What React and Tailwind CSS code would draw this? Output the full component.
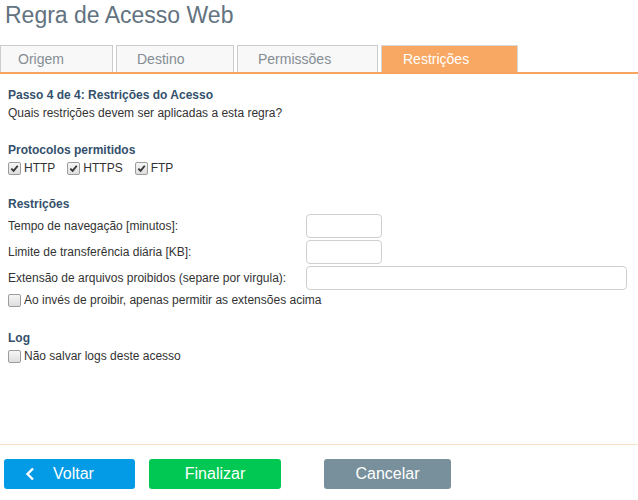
import React from 'react';

const tabs = [
  { label: 'Origem', w: 'w-[113px]', pl: 'pl-[17px]' },
  { label: 'Destino', w: 'w-[118px]', pl: 'pl-[20px]' },
  { label: 'Permissões', w: 'w-[141px]', pl: 'pl-[20px]' },
  { label: 'Restrições', w: 'w-[137px]', pl: 'pl-[21px]', active: true },
];

const Check = ({ checked, label }) => (
  <label className="flex items-center gap-[3px]">
    <span className="w-[13px] h-[13px] rounded-[2px] border border-[#9c9c9c] bg-gradient-to-b from-[#f6f6f6] to-[#dedede] flex items-center justify-center">
      {checked && (
        <svg width="9" height="9" viewBox="0 0 10 10">
          <path d="M1.5 5.2 L4 7.6 L8.6 2" fill="none" stroke="#333" strokeWidth="2" />
        </svg>
      )}
    </span>
    <span>{label}</span>
  </label>
);

const Field = ({ label, wide }) => (
  <div className="flex items-center h-[26px]">
    <span className="w-[298px] shrink-0">{label}</span>
    <div className={`h-[24px] rounded-[4px] border border-[#cfcfcf] bg-white ${wide ? 'w-[321px]' : 'w-[76px]'}`} />
  </div>
);

export default function App() {
  return (
    <div className="w-[638px] h-[500px] bg-white flex flex-col text-[12px] text-[#333]" style={{ fontFamily: '"Liberation Sans", Arial, sans-serif' }}>
      <h1 className="text-[23px] leading-[30px] text-[#62737f] pl-[5px]">Regra de Acesso Web</h1>

      <div className="mt-[15px] flex items-end gap-[3px] border-b-2 border-[#f6a45f] h-[29px]">
        {tabs.map((t) => (
          <div
            key={t.label}
            className={`${t.w} ${t.pl} h-[27px] flex items-center text-[14px] border border-b-0 ${t.active ? 'bg-[#f8a862] border-[#d8d8d8] text-white' : 'bg-[#f8f8f8] border-[#cccccc] text-[#858d94]'}`}
          >
            {t.label}
          </div>
        ))}
      </div>

      <div className="px-[8px] pt-[12px] flex-1">
        <div className="font-bold text-[#34506c] leading-[18px]">Passo 4 de 4: Restrições do Acesso</div>
        <div className="leading-[18px]">Quais restrições devem ser aplicadas a esta regra?</div>

        <div className="mt-[19px] font-bold text-[#34506c] leading-[18px]">Protocolos permitidos</div>
        <div className="flex items-center gap-[12px] leading-[18px]">
          <Check checked label="HTTP" />
          <Check checked label="HTTPS" />
          <Check checked label="FTP" />
        </div>

        <div className="mt-[18px] font-bold text-[#34506c] leading-[18px]">Restrições</div>
        <div className="flex flex-col">
          <Field label="Tempo de navegação [minutos]:" />
          <Field label="Limite de transferência diária [KB]:" />
          <Field label="Extensão de arquivos proibidos (separe por virgula):" wide />
        </div>
        <div className="leading-[18px]">
          <Check label="Ao invés de proibir, apenas permitir as extensões acima" />
        </div>

        <div className="mt-[20px] font-bold text-[#34506c] leading-[18px]">Log</div>
        <div className="leading-[18px]">
          <Check label="Não salvar logs deste acesso" />
        </div>
      </div>

      <div className="border-t border-[#fbe0c8] h-[56px] flex items-start pt-[14px] pl-[4px] text-[16px] text-white">
        <button className="w-[131px] h-[30px] rounded-[3px] bg-[#039be5] flex items-center">
          <svg width="12" height="14" viewBox="0 0 12 14" className="ml-[20px]">
            <path d="M9 1.5 L3.5 7 L9 12.5" fill="none" stroke="#fff" strokeWidth="2.4" />
          </svg>
          <span className="ml-[17px]">Voltar</span>
        </button>
        <button className="ml-[14px] w-[132px] h-[30px] rounded-[3px] bg-[#00c853]">Finalizar</button>
        <button className="ml-[43px] w-[127px] h-[30px] rounded-[3px] bg-[#78909c]">Cancelar</button>
      </div>
    </div>
  );
}
